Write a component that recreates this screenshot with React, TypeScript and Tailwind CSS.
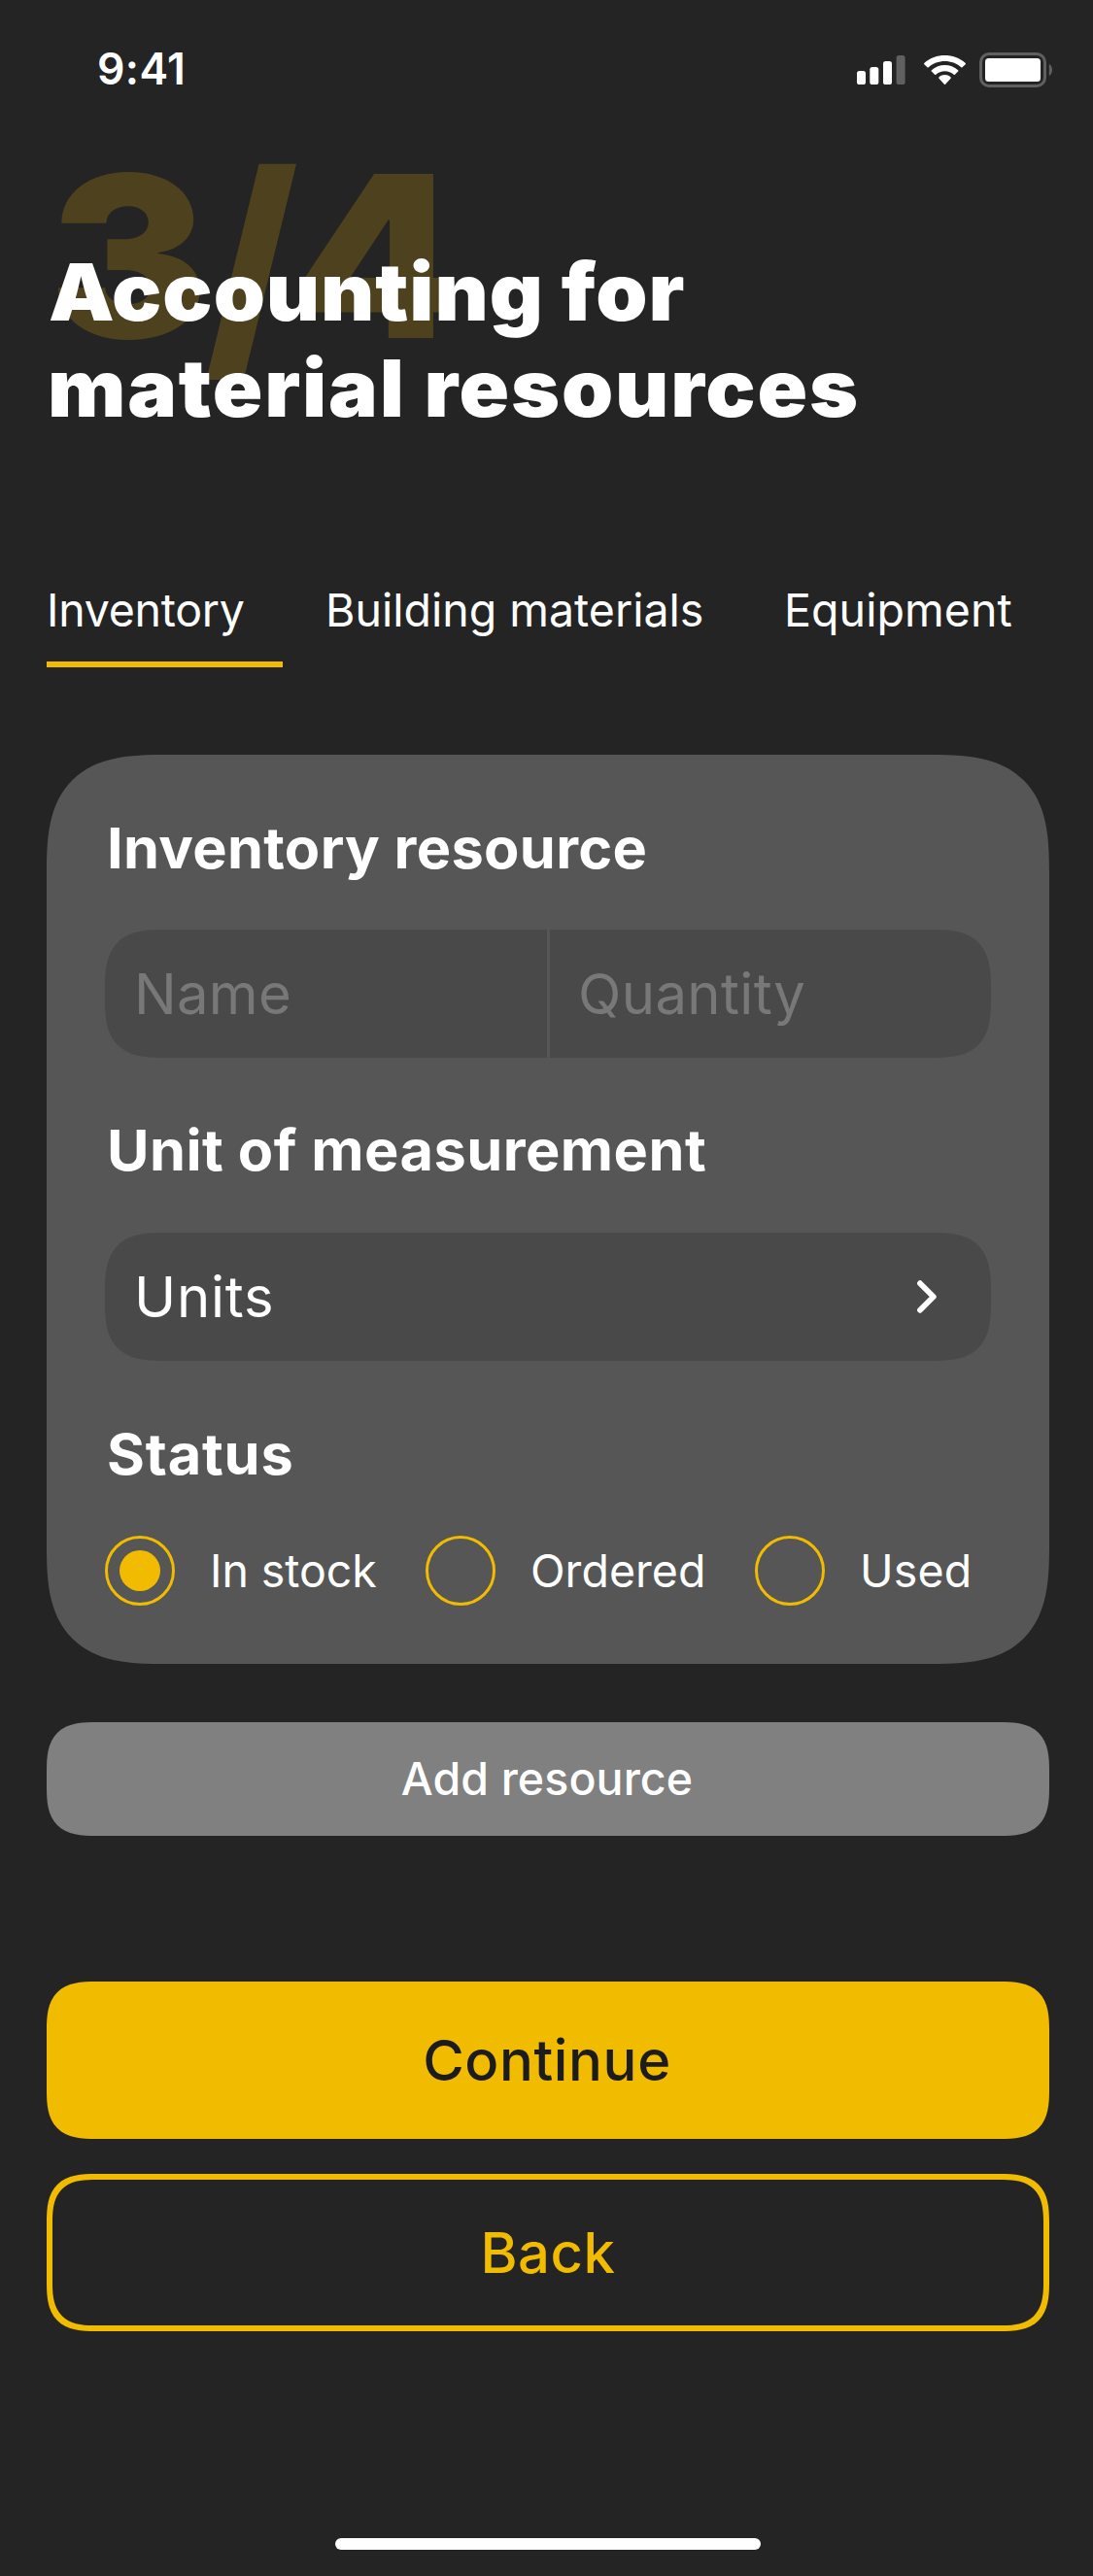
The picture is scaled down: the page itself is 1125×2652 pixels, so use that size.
import { useState } from "react";

const tabs = [
  { label: "Inventory", box: "w-[243px] mr-[44px]", text: "tracking-[-0.28px]" },
  { label: "Building materials", box: "w-[390px] mr-[82px]", text: "" },
  { label: "Equipment", box: "", text: "tracking-[0.08px]" },
];

const statuses = [
  { label: "In stock", box: "w-[330px]", text: "tracking-[-0.06px]" },
  { label: "Ordered", box: "w-[339px]", text: "tracking-[0.05px]" },
  { label: "Used", box: "", text: "tracking-[0.2px]" },
];

function StatusBar() {
  return (
    <div className="flex h-[141px] items-center justify-between pl-[100px] pr-[42px]">
      <span className="pt-[2px] text-[44.5px] font-semibold leading-none tracking-[0.4px]">9:41</span>
      <div className="flex items-center">
        <svg className="mt-[3px]" width="50" height="30" viewBox="0 0 50 30">
          <rect x="0" y="16" width="9" height="14" rx="2.6" fill="#fff" />
          <rect x="13.3" y="12" width="9" height="18" rx="2.6" fill="#fff" />
          <rect x="27" y="6" width="9" height="24" rx="2.6" fill="#fff" />
          <rect x="40.6" y="0" width="9" height="30" rx="2.6" fill="#606061" />
        </svg>
        <svg
          className="ml-[19px] mt-[3px]"
          width="43"
          height="30"
          viewBox="0 0 17.15 12.33"
          preserveAspectRatio="none"
          fill="#fff"
        >
          <path d="M8.5713 2.46628C11.0584 2.46639 13.4504 3.38847 15.2529 5.04195C15.3887 5.1696 15.6056 5.16799 15.7393 5.03834L17.0368 3.77487C17.1045 3.70911 17.1422 3.62004 17.1417 3.52735C17.1411 3.43467 17.1023 3.34603 17.0338 3.28104C12.3028 -1.09368 4.83907 -1.09368 0.108056 3.28104C0.039524 3.34598 0.000639766 3.4346 0 3.52728C-0.000624118 3.61996 0.0370483 3.70906 0.104689 3.77487L1.40255 5.03834C1.53615 5.16819 1.75327 5.1698 1.88893 5.04195C3.69167 3.38836 6.08395 2.46628 8.5713 2.46628Z" />
          <path d="M8.56795 6.68656C9.92527 6.68647 11.2341 7.19821 12.2403 8.12234C12.3763 8.2535 12.5907 8.25065 12.7234 8.11594L14.0106 6.79681C14.0784 6.72762 14.116 6.63376 14.1151 6.53622C14.1141 6.43868 14.0748 6.3456 14.0057 6.27777C10.9416 3.37926 6.19688 3.37926 3.13274 6.27777C3.06366 6.3456 3.02435 6.43872 3.02345 6.53629C3.02254 6.63385 3.06028 6.72768 3.12822 6.79681L4.41513 8.11594C4.54778 8.25065 4.76215 8.2535 4.89823 8.12234C5.90368 7.19882 7.21152 6.68713 8.56795 6.68656Z" />
          <path d="M11.0924 9.48011C11.0943 9.58546 11.0572 9.68703 10.9899 9.76084L8.81327 12.2156C8.74946 12.2877 8.66247 12.3283 8.5717 12.3283C8.48093 12.3283 8.39394 12.2877 8.33013 12.2156L6.15314 9.76084C6.08585 9.68697 6.04884 9.58537 6.05083 9.48002C6.05282 9.37467 6.09363 9.27484 6.16363 9.20412C7.55395 7.89091 9.58946 7.89091 10.9798 9.20412C11.0497 9.27489 11.0905 9.37476 11.0924 9.48011Z" />
        </svg>
        <svg className="ml-[14px] mt-[3px]" width="75" height="36" viewBox="0 0 75 36">
          <rect x="1.5" y="1.5" width="66" height="33" rx="8.5" fill="none" stroke="#606061" strokeWidth="3" />
          <rect x="6" y="6" width="57" height="24" rx="3.5" fill="#fff" />
          <path d="M71.8 12C73.9 13 75 15.4 75 18s-1.1 5-3.2 6z" fill="#606061" />
        </svg>
      </div>
    </div>
  );
}

function SectionTitle({ className, children }: { className: string; children: string }) {
  return (
    <h2 className={`ml-[1.5px] origin-left scale-x-[1.025] text-[58px] font-bold leading-[70px] ${className}`}>
      {children}
    </h2>
  );
}

function Radio({ checked }: { checked: boolean }) {
  return (
    <span className="flex size-[72px] shrink-0 items-center justify-center rounded-full border-[3px] border-[#f1bb00]">
      {checked && <span className="size-[42px] rounded-full bg-[#f1bb00]" />}
    </span>
  );
}

export default function App() {
  const [tab, setTab] = useState("Inventory");
  const [status, setStatus] = useState("In stock");

  return (
    <div className="h-[2652px] w-[1125px] overflow-hidden bg-[#242424] font-['Inter',sans-serif] text-white">
      <StatusBar />

      <header className="relative h-[459px] pt-[110px]">
        <span className="absolute left-[50.5px] top-[7px] origin-left scale-x-[1.05] whitespace-nowrap text-[232px] font-black leading-[232px] tracking-[-5px] text-[#4d421d]">
          3<span className="inline-block translate-y-[7px] scale-x-95 scale-y-110">/</span>4
        </span>
        <h1 className="relative whitespace-nowrap text-[81.6px] font-black leading-[99px]">
          <span className="ml-[50px] block origin-left scale-x-[1.045] tracking-[0.85px]">Accounting for</span>
          <span className="ml-[49px] block origin-left scale-x-[1.045] tracking-[1.7px]">material resources</span>
        </h1>
      </header>

      <nav className="flex pl-12">
        {tabs.map((t) => (
          <button
            key={t.label}
            onClick={() => setTab(t.label)}
            className={`flex h-[87px] shrink-0 flex-col items-start whitespace-nowrap border-b-[6px] text-[46.5px] leading-[56px] ${t.box} ${
              t.label === tab ? "border-[#f1bb00]" : "border-transparent"
            }`}
          >
            <span className={t.text}>{t.label}</span>
          </button>
        ))}
      </nav>

      <main className="ml-12 mt-[90px] w-[1032px]">
        <section className="h-[936px] rounded-[122px] bg-[#565656] px-[60px] pt-[61px] [corner-shape:superellipse(1.51)]">
          <SectionTitle className="tracking-[0.32px]">Inventory resource</SectionTitle>
          <div className="mt-[49px] flex h-[132px] items-center overflow-hidden rounded-[61px] bg-[#494949] text-[58px] text-[#787878] [corner-shape:superellipse(1.51)]">
            <div className="w-[455px] pl-[30px] tracking-[0.3px]">Name</div>
            <div className="h-full w-[3px] bg-[#565656]" />
            <div className="pl-[29px] tracking-[0.37px]">Quantity</div>
          </div>

          <SectionTitle className="mt-[60px] tracking-[0.45px]">Unit of measurement</SectionTitle>
          <button className="mt-[50px] flex h-[132px] w-full items-center justify-between rounded-[61px] bg-[#494949] pl-[30px] pr-[56px] text-[58px] [corner-shape:superellipse(1.51)]">
            <span className="tracking-[0.78px]">Units</span>
            <svg width="20" height="34" viewBox="0 0 20 34" fill="none">
              <path d="M3 3.2L16.8 17L3 30.8" stroke="#fff" strokeWidth="5.8" strokeLinecap="round" strokeLinejoin="round" />
            </svg>
          </button>

          <SectionTitle className="mt-[61px] tracking-[0.8px]">Status</SectionTitle>
          <div className="mt-[49px] flex text-[46.5px]">
            {statuses.map((s) => (
              <button key={s.label} onClick={() => setStatus(s.label)} className={`flex h-[72px] items-center gap-9 ${s.box}`}>
                <Radio checked={s.label === status} />
                <span className={`whitespace-nowrap leading-[56px] ${s.text}`}>{s.label}</span>
              </button>
            ))}
          </div>
        </section>

        <button className="mt-[60px] block h-[117px] w-full rounded-[51px] bg-[#808080] pb-[2px] pr-[2px] text-[46.5px] font-medium leading-[56px] tracking-[0.1px] [corner-shape:superellipse(1.51)]">
          Add resource
        </button>
        <button className="mt-[150px] block h-[162px] w-full rounded-[51px] bg-[#f1bb00] pr-[2px] text-[58px] font-medium leading-[70px] tracking-[0.63px] text-[#1c1c1c] [corner-shape:superellipse(1.51)]">
          Continue
        </button>
        <button className="mt-9 block h-[162px] w-full rounded-[51px] border-[6px] border-[#f1bb00] text-[58px] font-medium leading-[70px] tracking-[0.5px] text-[#f1bb00] [corner-shape:superellipse(1.51)]">
          Back
        </button>
      </main>

      <div className="ml-[345px] mt-[213px] h-3 w-[438px] rounded-full bg-white" />
    </div>
  );
}
